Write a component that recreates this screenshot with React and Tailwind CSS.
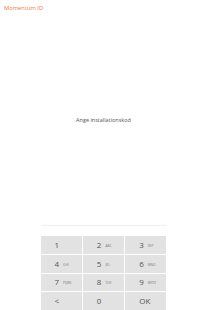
import React from "react";

const keys = [
  ["1", ""], ["2", "ABC"], ["3", "DEF"],
  ["4", "GHI"], ["5", "JKL"], ["6", "MNO"],
  ["7", "PQRS"], ["8", "TUV"], ["9", "WXYZ"],
  ["<", ""], ["0", ""], ["OK", ""],
];

export default function App() {
  return (
    <div
      className="flex flex-col h-[310px] w-[207px] bg-white overflow-hidden"
      style={{ fontFamily: '"Open Sans", "Noto Sans", sans-serif' }}
    >
      <div className="h-[14px] pl-[4px] pt-[4px] text-[5.8px] leading-[8px] text-[#f0763f]">
        Momentum ID
      </div>
      <div className="mt-[102px] text-center text-[5.5px] leading-[8px] text-[#555]">
        Ange installationskod
      </div>
      <div className="mt-auto flex flex-col items-center">
        <div className="w-[126px] h-px bg-[#efefef] mb-[10px]" />
        <div className="w-[126px] h-[74px] grid grid-cols-3 grid-rows-4 gap-px bg-white">
          {keys.map(([d, l]) => (
            <div
              key={d}
              className="bg-[#e2e2e2] flex items-center pl-[14px] text-[#555]"
            >
              <span className="text-[8px] leading-[10px]">{d}</span>
              {l && (
                <span className="ml-[4px] text-[3.2px] leading-[10px] translate-y-[0.5px] text-[#777]">{l}</span>
              )}
            </div>
          ))}
        </div>
      </div>
    </div>
  );
}
